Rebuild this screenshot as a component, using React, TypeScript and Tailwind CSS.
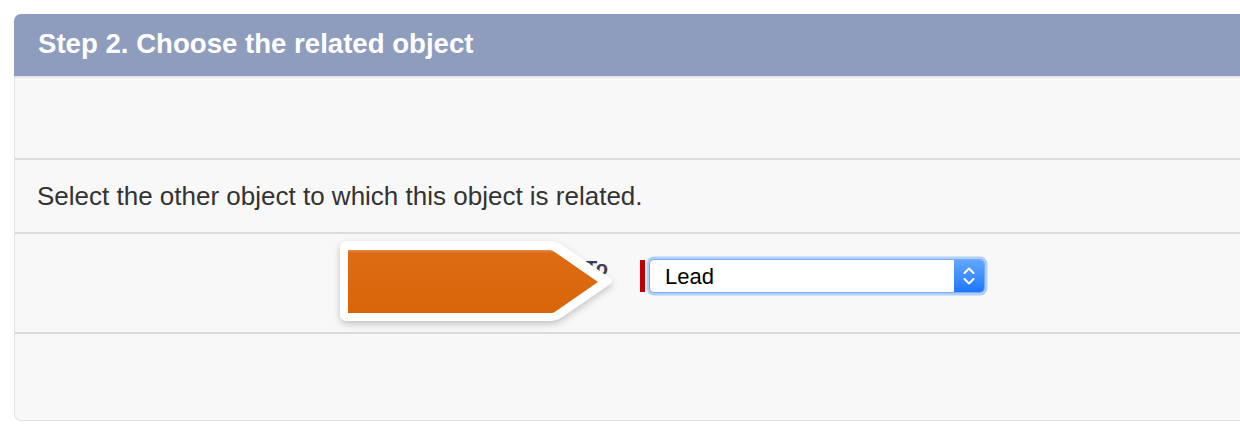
import React from 'react';

function Callout() {
  return (
    <svg
      className="absolute left-[315px] top-[-2px] z-10"
      width="295"
      height="100"
      viewBox="0 0 295 100"
    >
      <defs>
        <filter id="callout-shadow" x="-10%" y="-20%" width="120%" height="150%">
          <feDropShadow dx="0" dy="3" stdDeviation="3.5" floodColor="#000" floodOpacity="0.22" />
        </filter>
        <linearGradient id="callout-orange" x1="0" y1="0" x2="0" y2="1">
          <stop offset="0" stopColor="#e6894a" />
          <stop offset="0.05" stopColor="#dd6c14" />
          <stop offset="1" stopColor="#d96509" />
        </linearGradient>
      </defs>
      <path
        d="M18 9 H218 Q226 9 232 13 L280 46 Q284 49 280 52 L232 85 Q226 89 218 89 H18 Q10 89 10 81 V17 Q10 9 18 9 Z"
        fill="#fff"
        filter="url(#callout-shadow)"
      />
      <path d="M18 18 H220 Q222 18 224 19.5 L268 50 L224 80.5 Q222 81 220 81 H18 Z" fill="url(#callout-orange)" />
    </svg>
  );
}

function SelectBox({ value }: { value: string }) {
  return (
    <div className="flex h-[34px] w-[336px] overflow-hidden rounded-[5px] border border-[#78aaf0] bg-white shadow-[0_0_0_2.5px_#b0cff8]">
      <div className="flex flex-1 items-center pl-[15px] text-[22px] text-black">{value}</div>
      <div className="flex w-[30px] items-center justify-center bg-gradient-to-b from-[#62a6ff] to-[#1b76fb]">
        <svg width="12" height="20" viewBox="0 0 12 20" fill="none" stroke="#fff" strokeWidth="2" strokeLinecap="round" strokeLinejoin="round">
          <path d="M1.5 7 L6 2.5 L10.5 7" />
          <path d="M1.5 13 L6 17.5 L10.5 13" />
        </svg>
      </div>
    </div>
  );
}

export default function App() {
  return (
    <div className="h-[430px] w-[1240px] overflow-hidden bg-white pl-[14px] pt-[14px] font-['Liberation_Sans',Arial,sans-serif]">
      <div className="w-[1260px] rounded-t-[7px] rounded-bl-[7px] border-b border-l border-[#e3e3e3] bg-[#f8f8f8]">
        <div className="-ml-px flex h-[62px] items-center rounded-tl-[7px] bg-[#8e9dbd] pb-[2px] pl-[24px] text-[27.6px] font-bold text-white">
          Step 2. Choose the related object
        </div>
        <div className="h-[84px] border-t-2 border-b-2 border-t-[#e6e6e6] border-b-[#dcdcdc]" />
        <div className="flex h-[74px] items-center border-b-2 border-[#dcdcdc] pl-[22px] text-[26px] text-[#333]">
          Select the other object to which this object is related.
        </div>
        <div className="relative flex h-[100px] border-b-2 border-[#dcdcdc] pt-[24px]">
          <div className="w-[593px] text-right text-[20px] leading-[20px] font-bold text-[#3e3e4c]">Related To</div>
          <div className="ml-[32px] flex items-start gap-[4px]">
            <div className="mt-[2px] h-[32px] w-[5px] bg-[#c00000]" />
            <div className="mt-[1px]">
              <SelectBox value="Lead" />
            </div>
          </div>
          <Callout />
        </div>
        <div className="h-[86px]" />
      </div>
    </div>
  );
}
